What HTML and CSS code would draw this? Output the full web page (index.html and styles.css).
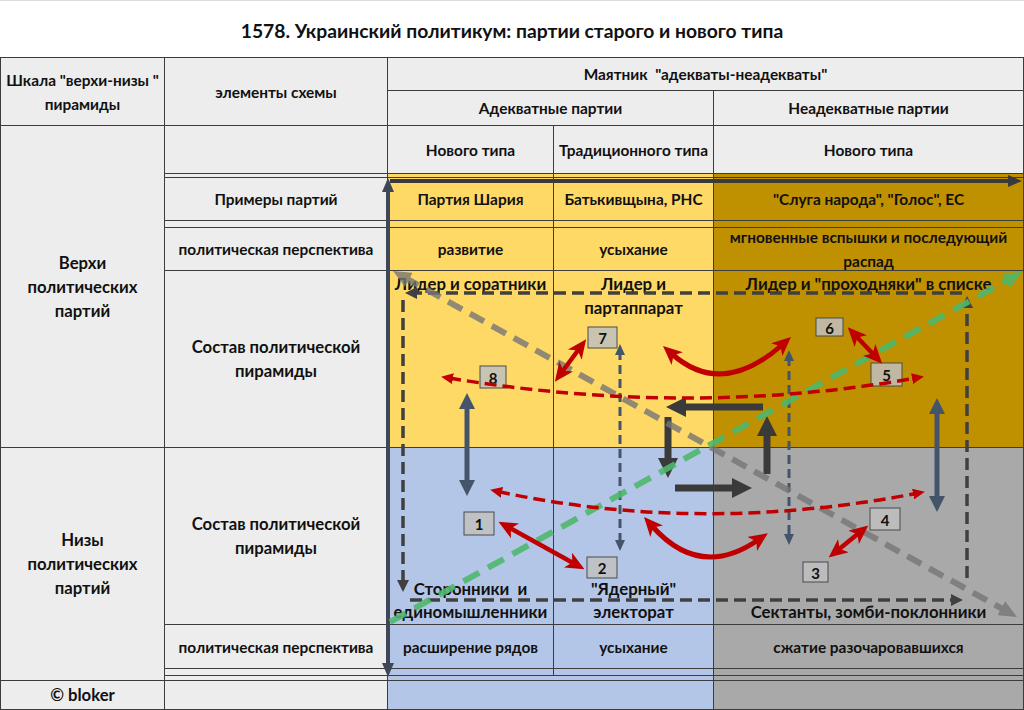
FILE: index.html
```html
<!DOCTYPE html>
<html lang="ru">
<head>
<meta charset="utf-8">
<title>1578. Украинский политикум</title>
<link rel="stylesheet" href="styles.css">
</head>
<body>
<div class="page">
  <div class="title">1578. Украинский политикум: партии старого и нового типа</div>
  <div class="grid">
    <div class="cell hdr col1 rows-1-2 small">Шкала "верхи-низы "<br>пирамиды</div>
    <div class="cell hdr col2 rows-1-2 small">элементы схемы</div>
    <div class="cell hdr col345 row1 small">Маятник&nbsp; "адекваты-неадекваты"</div>
    <div class="cell hdr col34 row2 small">Адекватные партии</div>
    <div class="cell hdr col5 row2 small">Неадекватные партии</div>

    <div class="cell hdr col1 rows-3-8 big">Верхи<br>политических<br>партий</div>
    <div class="cell hdr col2 row3"></div>
    <div class="cell hdr col3 row3 small">Нового типа</div>
    <div class="cell hdr col4 row3 small">Традиционного типа</div>
    <div class="cell hdr col5 row3 small">Нового типа</div>

    <div class="cell hdr col2 row4"></div>
    <div class="cell yellow col3 row4"></div>
    <div class="cell yellow col4 row4"></div>
    <div class="cell gold col5 row4"></div>

    <div class="cell hdr col2 row5 small">Примеры партий</div>
    <div class="cell yellow col3 row5 small">Партия Шария</div>
    <div class="cell yellow col4 row5 small">Батькивщына, РНС</div>
    <div class="cell gold col5 row5 small">"Слуга народа", "Голос", ЕС</div>

    <div class="cell hdr col2 row6"></div>
    <div class="cell yellow col3 row6"></div>
    <div class="cell yellow col4 row6"></div>
    <div class="cell gold col5 row6"></div>

    <div class="cell hdr col2 row7 small">политическая перспектива</div>
    <div class="cell yellow col3 row7 small">развитие</div>
    <div class="cell yellow col4 row7 small">усыхание</div>
    <div class="cell gold col5 row7 small">мгновенные вспышки и последующий<br>распад</div>

    <div class="cell hdr col2 row8 big">Состав политической<br>пирамиды</div>
    <div class="cell yellow col3 row8 large top">Лидер и соратники</div>
    <div class="cell yellow col4 row8 large top">Лидер и<br>партаппарат</div>
    <div class="cell gold col5 row8 large top">Лидер и "проходняки" в списке</div>

    <div class="cell hdr col1 rows-9-12 big">Низы<br>политических<br>партий</div>
    <div class="cell hdr col2 row9 big">Состав политической<br>пирамиды</div>
    <div class="cell blue col3 row9 large bottom">Сторонники&nbsp; и<br>единомышленники</div>
    <div class="cell blue col4 row9 large bottom">"Ядерный"<br>электорат</div>
    <div class="cell gray col5 row9 large bottom">Сектанты, зомби-поклонники</div>

    <div class="cell hdr col2 row10 small">политическая перспектива</div>
    <div class="cell blue col3 row10 small">расширение рядов</div>
    <div class="cell blue col4 row10 small">усыхание</div>
    <div class="cell gray col5 row10 small">сжатие разочаровавшихся</div>

    <div class="cell hdr col2 row11"></div>
    <div class="cell blue col3 row11"></div>
    <div class="cell blue col4 row11"></div>
    <div class="cell gray col5 row11"></div>

    <div class="cell hdr col2 row12"></div>
    <div class="cell blue col34 row12"></div>
    <div class="cell gray col5 row12"></div>

    <div class="cell hdr col1 row13 big">© bloker</div>
    <div class="cell hdr col2 row13"></div>
    <div class="cell blue col34 row13"></div>
    <div class="cell gray col5 row13"></div>
  </div>

  <svg class="overlay" width="1024" height="710" viewBox="0 0 1024 710">
    <defs>
      <marker id="mAxis" viewBox="0 0 14 12" markerWidth="14" markerHeight="12" markerUnits="userSpaceOnUse" refX="4" refY="6" orient="auto-start-reverse"><path d="M0,0 L14,6 L0,12 Z" fill="#3f4757"/></marker>
      <marker id="mAxisH" viewBox="0 0 14 12" markerWidth="14" markerHeight="12" markerUnits="userSpaceOnUse" refX="4" refY="6" orient="auto-start-reverse"><path d="M0,0 L14,6 L0,12 Z" fill="#3a3a3a"/></marker>
      <marker id="mDash" viewBox="0 0 12 12" markerWidth="12" markerHeight="12" markerUnits="userSpaceOnUse" refX="3" refY="6" orient="auto-start-reverse"><path d="M0,0 L12,6 L0,12 Z" fill="#404040"/></marker>
      <marker id="mGray" viewBox="0 0 18 16" markerWidth="18" markerHeight="16" markerUnits="userSpaceOnUse" refX="5" refY="8" orient="auto-start-reverse"><path d="M0,0 L18,8 L0,16 Z" fill="#767676"/></marker>
      <marker id="mGreen" viewBox="0 0 18 16" markerWidth="18" markerHeight="16" markerUnits="userSpaceOnUse" refX="5" refY="8" orient="auto-start-reverse"><path d="M0,0 L18,8 L0,16 Z" fill="#4fb86c"/></marker>
      <marker id="mRedS" viewBox="0 0 12 11" markerWidth="12" markerHeight="11" markerUnits="userSpaceOnUse" refX="4" refY="5.5" orient="auto-start-reverse"><path d="M0,0 L12,5.5 L0,11 Z" fill="#c00000"/></marker>
      <marker id="mRed" viewBox="0 0 19 17" markerWidth="19" markerHeight="17" markerUnits="userSpaceOnUse" refX="7" refY="8.5" orient="auto-start-reverse"><path d="M0,0 L19,8.5 L0,17 L5,8.5 Z" fill="#c00000"/></marker>
      <marker id="mBlue" viewBox="0 0 16 16" markerWidth="16" markerHeight="16" markerUnits="userSpaceOnUse" refX="7" refY="8" orient="auto-start-reverse"><path d="M0,0 L16,8 L0,16 Z" fill="#44546a"/></marker>
      <marker id="mBlueS" viewBox="0 0 11 10" markerWidth="11" markerHeight="10" markerUnits="userSpaceOnUse" refX="4" refY="5" orient="auto-start-reverse"><path d="M0,0 L11,5 L0,10 Z" fill="#44546a"/></marker>
      <marker id="mCyc" viewBox="0 0 20 20" markerWidth="20" markerHeight="20" markerUnits="userSpaceOnUse" refX="8" refY="10" orient="auto-start-reverse"><path d="M0,0 L20,10 L0,20 Z" fill="#3a3a3a"/></marker>
    </defs>

    <!-- axes -->
    <path class="axis-v" d="M388,188 L388,667" marker-start="url(#mAxis)" marker-end="url(#mAxis)"/>
    <path class="axis-h" d="M390,181 L1012,181" marker-end="url(#mAxisH)"/>

    <!-- dashed cycle rectangle -->
    <path class="dash-rect" d="M967,578 L967,305" marker-end="url(#mDash)"/>
    <path class="dash-rect" d="M962,293 L414,293" marker-end="url(#mDash)"/>
    <path class="dash-rect" d="M403,300 L403,583" marker-end="url(#mDash)"/>
    <path class="dash-rect" d="M410,600 L954,600" marker-end="url(#mDash)"/>

    <!-- blue dashed verticals -->
    <path class="blue-dash" d="M620,351 L620,544" marker-start="url(#mBlueS)" marker-end="url(#mBlueS)"/>
    <path class="blue-dash" d="M789,357 L789,538" marker-start="url(#mBlueS)" marker-end="url(#mBlueS)"/>

    <!-- central cycle -->
    <path class="cyc" d="M763,407 L678,407" marker-end="url(#mCyc)"/>
    <path class="cyc" d="M668,417 L668,466" marker-end="url(#mCyc)"/>
    <path class="cyc" d="M675,488 L740,488" marker-end="url(#mCyc)"/>
    <path class="cyc" d="M767,474 L767,428" marker-end="url(#mCyc)"/>

    <!-- diagonals -->
    <g class="diag-gray">
      <path d="M404.4,277.3 L1005.6,610.7" marker-start="url(#mGray)" marker-end="url(#mGray)"/>
    </g>
    <g class="diag-green">
      <path d="M390,622 L1010.6,278.3" marker-end="url(#mGreen)"/>
    </g>

    <!-- blue solid verticals -->
    <path class="blue-solid" d="M467,402 L467,487" marker-start="url(#mBlue)" marker-end="url(#mBlue)"/>
    <path class="blue-solid" d="M937,407 L937,503" marker-start="url(#mBlue)" marker-end="url(#mBlue)"/>

    <!-- numbered boxes -->
    <g class="num">
      <rect x="464" y="512" width="30" height="23"/><text x="479" y="524">1</text>
      <rect x="587" y="557" width="30" height="21"/><text x="602" y="568">2</text>
      <rect x="803" y="562" width="25" height="20"/><text x="815.5" y="572.5">3</text>
      <rect x="870" y="508" width="30" height="22"/><text x="885" y="519.5">4</text>
      <rect x="871" y="363" width="31" height="23"/><text x="886.5" y="375">5</text>
      <rect x="816" y="318" width="27" height="18"/><text x="829.5" y="327.5">6</text>
      <rect x="588" y="327" width="29" height="21"/><text x="602.5" y="338">7</text>
      <rect x="480" y="366" width="26" height="22"/><text x="493" y="377.5">8</text>
    </g>

    <!-- red dashed curves -->
    <path class="red-dash" d="M449,378 Q690,418 916,378" marker-start="url(#mRedS)" marker-end="url(#mRedS)"/>
    <path class="red-dash" d="M498,491.5 Q700,535 917,493.3" marker-start="url(#mRedS)" marker-end="url(#mRedS)"/>

    <!-- red solid double arrows -->
    <path class="red thick" d="M672,354 Q722,398 782,345" marker-start="url(#mRed)" marker-end="url(#mRed)"/>
    <path class="red thick" d="M652,526 Q700,580 758,540" marker-start="url(#mRed)" marker-end="url(#mRed)"/>
    <path class="red" d="M509,527.5 L574,563.5" marker-start="url(#mRed)" marker-end="url(#mRed)"/>
    <path class="red" d="M562,372 L579,349" marker-start="url(#mRed)" marker-end="url(#mRed)"/>
    <path class="red" d="M856,336 L874,355" marker-start="url(#mRed)" marker-end="url(#mRed)"/>
    <path class="red" d="M838,550 L859,533" marker-start="url(#mRed)" marker-end="url(#mRed)"/>
  </svg>
</div>
</body>
</html>
```
FILE: styles.css
```css
* { box-sizing: border-box; }

body {
  margin: 0;
  background: #ffffff;
  font-family: Lato, "Open Sans", "Liberation Sans", sans-serif;
  color: #111111;
}

.page {
  position: relative;
  width: 1024px;
  height: 710px;
  overflow: hidden;
  background: #ffffff;
}

.title {
  height: 58px;
  border-top: 1px solid #dcdcdc;
  border-bottom: 1px solid #3c3c3c;
  display: flex;
  align-items: center;
  justify-content: center;
  padding-top: 2px;
  font-weight: 700;
  font-size: 19.3px;
}

.grid {
  display: grid;
  grid-template-columns: 165px 223px 166px 160px 310px;
  grid-template-rows: 33px 35px 48px 4px 43px 7px 43px 177px 177px 44px 7px 5px 29px;
}

.cell {
  border-right: 1px solid #3c3c3c;
  border-bottom: 1px solid #3c3c3c;
  display: flex;
  align-items: center;
  justify-content: center;
  text-align: center;
  font-weight: 700;
  line-height: 24px;
  white-space: nowrap;
}

.small { font-size: 15.4px; }
.big { font-size: 16.7px; line-height: 24px; }
.large { font-size: 16.8px; line-height: 24px; }
.large.top { align-items: flex-start; padding-top: 1px; }
.large.bottom { align-items: flex-end; line-height: 23px; padding-bottom: 1px; }

.hdr { background: #ededed; }
.yellow { background: #ffd966; }
.gold { background: #bf9000; }
.blue { background: #b4c6e7; }
.gray { background: #a9a9a9; }

.col1 { grid-column: 1; border-left: 1px solid #3c3c3c; }
.col2 { grid-column: 2; }
.col3 { grid-column: 3; }
.col4 { grid-column: 4; }
.col5 { grid-column: 5; }
.col34 { grid-column: 3 / 5; }
.col345 { grid-column: 3 / 6; }

.row1 { grid-row: 1; }
.row2 { grid-row: 2; }
.row3 { grid-row: 3; }
.row4 { grid-row: 4; }
.row5 { grid-row: 5; }
.row6 { grid-row: 6; }
.row7 { grid-row: 7; }
.row8 { grid-row: 8; }
.row9 { grid-row: 9; }
.row10 { grid-row: 10; }
.row11 { grid-row: 11; }
.row12 { grid-row: 12; }
.row13 { grid-row: 13; }
.rows-1-2 { grid-row: 1 / 3; }
.rows-3-8 { grid-row: 3 / 9; }
.rows-9-12 { grid-row: 9 / 13; }

.overlay {
  position: absolute;
  left: 0;
  top: 0;
  pointer-events: none;
}

.axis-v { fill: none; stroke: #3f4757; stroke-width: 4; }
.axis-h { fill: none; stroke: #3a3a3a; stroke-width: 4; }

.dash-rect { fill: none; stroke: #404040; stroke-width: 3.5; stroke-dasharray: 12 6; }

.blue-dash { fill: none; stroke: #44546a; stroke-width: 3; stroke-dasharray: 9 5; }

.cyc { fill: none; stroke: #3a3a3a; stroke-width: 7; }

.diag-gray { opacity: 0.8; }
.diag-gray path { fill: none; stroke: #767676; stroke-width: 6; stroke-dasharray: 16 9; }

.diag-green { opacity: 0.9; }
.diag-green path { fill: none; stroke: #4fb86c; stroke-width: 6; stroke-dasharray: 18 10; }

.blue-solid { fill: none; stroke: #44546a; stroke-width: 5; }

.red-dash { fill: none; stroke: #c00000; stroke-width: 3.5; stroke-dasharray: 12 6; }
.red { fill: none; stroke: #c00000; stroke-width: 4.5; }
.red.thick { stroke-width: 5; }

.num rect { fill: #c0c0c0; fill-opacity: 0.85; stroke: #4a4a4a; stroke-width: 1; }
.num text {
  font-family: Lato, "Open Sans", sans-serif;
  font-weight: 700;
  font-size: 15px;
  fill: #111111;
  text-anchor: middle;
  dominant-baseline: central;
}
```
